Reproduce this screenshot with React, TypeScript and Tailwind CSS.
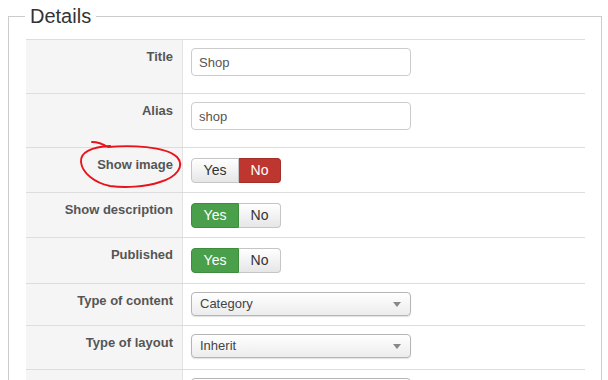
const rows = [
  { label: "Title", kind: "text", value: "Shop", h: "h-[54px]" },
  { label: "Alias", kind: "text", value: "shop", h: "h-[54px]" },
  { label: "Show image", kind: "toggle", value: "no", h: "h-[45px]" },
  { label: "Show description", kind: "toggle", value: "yes", h: "h-[45px]" },
  { label: "Published", kind: "toggle", value: "yes", h: "h-[46px]" },
  { label: "Type of content", kind: "select", value: "Category", h: "h-[42px]" },
  { label: "Type of layout", kind: "select", value: "Inherit", h: "h-[44px]" },
  { label: "Number of articles", kind: "select", value: "20", h: "h-[44px]" },
];

const Toggle = ({ value }: { value: string }) => {
  const off =
    "bg-gradient-to-b from-white to-[#e6e6e6] text-[#333] border-[#c5c5c5]";
  return (
    <div className="mt-[2px] flex h-[25px] text-[14px] leading-[23px]">
      <span
        className={
          "w-[48px] rounded-l-[4px] border text-center " +
          (value === "yes"
            ? "bg-[#4a9f4a] text-white border-[#3f8c3f]"
            : off)
        }
      >
        Yes
      </span>
      <span
        className={
          "w-[42px] rounded-r-[4px] border border-l-0 text-center " +
          (value === "no" ? "bg-[#bd362f] text-white border-[#a52e28]" : off)
        }
      >
        No
      </span>
    </div>
  );
};

const Field = ({ kind, value }: { kind: string; value: string }) => {
  if (kind === "text") {
    return (
      <div className="flex h-[28px] w-[220px] items-center rounded-[4px] border border-[#cccccc] bg-white pl-[7px] pt-px text-[13px] text-[#555]">
        {value}
      </div>
    );
  }
  if (kind === "toggle") return <Toggle value={value} />;
  return (
    <div className="flex h-[24px] w-[220px] items-center justify-between rounded-[4px] border border-[#b5b5b5] bg-gradient-to-b from-white to-[#ececec] pl-[8px] pr-[9px] text-[13px] text-[#444] shadow-[0_1px_1px_rgba(0,0,0,0.12)]">
      <span>{value}</span>
      <svg width="8" height="5" viewBox="0 0 8 5">
        <path d="M0 0 H8 L4 5 Z" fill="#888" />
      </svg>
    </div>
  );
};

const App = () => {
  return (
    <div className="relative h-[380px] w-[608px] overflow-hidden bg-white font-['Liberation_Sans',Arial,sans-serif]">
      <div className="pl-[8px] pr-[6px] pt-[4px]">
        <fieldset className="border border-[#cccccc] px-[16px] pl-[17px] pb-4">
          <legend className="-ml-px px-[5px] text-[20px] leading-[24px] text-[#333]">
            Details
          </legend>
          <div className="mt-[11px] border-b border-[#dddddd]">
            {rows.map((row) => (
              <div
                key={row.label}
                className={"flex border-t border-[#dddddd] " + row.h}
              >
                <div className="w-[156px] shrink-0 bg-[#f5f5f5] pr-[9px] pt-[8px] text-right text-[13px] font-bold leading-[18px] text-[#555]">
                  {row.label}
                </div>
                <div className="flex-1 border-l border-[#e3e3e3] pl-[8px] pt-[8px]">
                  <Field kind={row.kind} value={row.value} />
                </div>
              </div>
            ))}
          </div>
        </fieldset>
      </div>
      <svg
        className="pointer-events-none absolute left-0 top-0"
        width="608"
        height="380"
        viewBox="0 0 608 380"
      >
        <path
          d="M92 142 C97 142 103 144 108 147 C130 145 165 146 177 157 C185 166 177 177 160 182 C145 187 125 188 110 186 C95 183 82 173 81 162 C80 152 92 147 110 146"
          fill="none"
          stroke="#e8141b"
          strokeWidth="1.9"
          strokeLinecap="round"
        />
      </svg>
    </div>
  );
};

export default App;
